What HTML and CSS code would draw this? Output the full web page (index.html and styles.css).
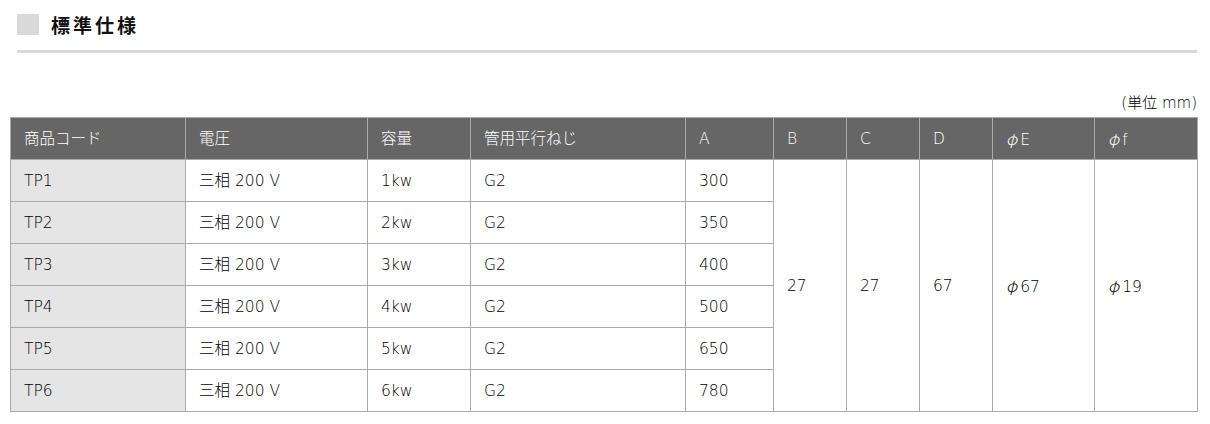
FILE: index.html
```html
<!DOCTYPE html>
<html lang="ja">
<head>
<meta charset="utf-8">
<link rel="stylesheet" href="styles.css">
</head>
<body>
<div class="page">
  <h2 class="heading"><span class="mark"></span><span class="title">標準仕様</span></h2>
  <p class="unit">(単位 mm)</p>
  <table class="spec">
    <colgroup>
      <col class="c1"><col class="c2"><col class="c3"><col class="c4"><col class="c5">
      <col class="c6"><col class="c7"><col class="c8"><col class="c9"><col class="c10">
    </colgroup>
    <thead>
      <tr><th>商品コード</th><th>電圧</th><th>容量</th><th>管用平行ねじ</th><th>A</th><th>B</th><th>C</th><th>D</th><th><span class="phi">φ</span>E</th><th><span class="phi">φ</span>f</th></tr>
    </thead>
    <tbody>
      <tr><td class="code">TP1</td><td>三相 200 V</td><td>1kw</td><td>G2</td><td>300</td>
        <td rowspan="6">27</td><td rowspan="6">27</td><td rowspan="6">67</td><td rowspan="6"><span class="phi">φ</span>67</td><td rowspan="6"><span class="phi">φ</span>19</td></tr>
      <tr><td class="code">TP2</td><td>三相 200 V</td><td>2kw</td><td>G2</td><td>350</td></tr>
      <tr><td class="code">TP3</td><td>三相 200 V</td><td>3kw</td><td>G2</td><td>400</td></tr>
      <tr><td class="code">TP4</td><td>三相 200 V</td><td>4kw</td><td>G2</td><td>500</td></tr>
      <tr><td class="code">TP5</td><td>三相 200 V</td><td>5kw</td><td>G2</td><td>650</td></tr>
      <tr><td class="code">TP6</td><td>三相 200 V</td><td>6kw</td><td>G2</td><td>780</td></tr>
    </tbody>
  </table>
</div>
</body>
</html>
```
FILE: styles.css
```css
html, body {
  margin: 0;
  padding: 0;
  background: #fff;
}
body {
  font-family: "DejaVu Sans", "Noto Sans CJK JP", sans-serif;
  color: #000;
}
.page {
  padding: 0 13px 0 10px;
}
.heading {
  margin: 0 0 0 7px;
  padding: 14px 0 15px 0;
  display: flex;
  align-items: center;
  border-bottom: 3px solid #d9d9d9;
  font-size: 19px;
  font-weight: bold;
  color: #111;
}
.mark {
  width: 22px;
  height: 21px;
  background: #d9d9d9;
  margin-right: 12px;
}
.title {
  font-family: "Noto Sans CJK JP", sans-serif;
  letter-spacing: 3px;
  line-height: 21px;
}
.unit {
  margin: 41px 0 5px 0;
  text-align: right;
  font-size: 15px;
  font-weight: 300;
  line-height: 18px;
  color: #000;
}
.spec {
  width: 1187px;
  border-collapse: collapse;
  table-layout: fixed;
  font-size: 15.5px;
}
.c1 { width: 175px; }
.c2 { width: 182px; }
.c3 { width: 103px; }
.c4 { width: 215px; }
.c5 { width: 88px; }
.c6 { width: 73px; }
.c7 { width: 73px; }
.c8 { width: 73px; }
.c9 { width: 102px; }
.c10 { width: 103px; }
.spec th, .spec td {
  border: 1px solid #aaaaaa;
  text-align: left;
  padding: 0 0 0 13px;
  height: 41px;
  line-height: 20px;
  vertical-align: middle;
  font-weight: 300;
}
.spec th {
  background: #666666;
  color: #fff;
}
.spec td {
  background: #fff;
  color: #000;
}
.spec td.code {
  background: #e5e5e5;
}
.phi {
  font-family: "Noto Sans CJK JP", sans-serif;
  font-style: italic;
  margin-right: 3px;
}
```
